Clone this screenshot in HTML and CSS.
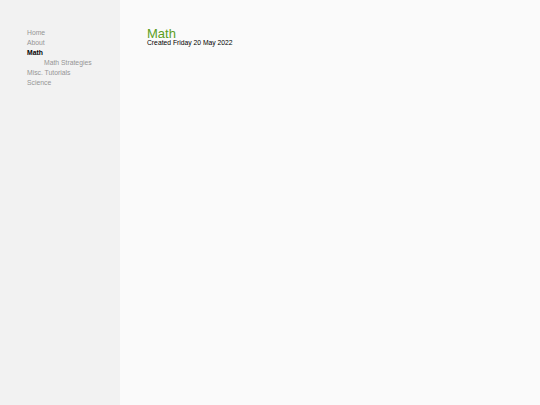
FILE: index.html
```html
<!DOCTYPE html>
<html>
<head>
<meta charset="utf-8">
<link rel="stylesheet" href="styles.css">
</head>
<body>
<div class="layout">
  <nav class="sidebar">
    <ul class="nav">
      <li><a class="link">Home</a></li>
      <li><a class="link">About</a></li>
      <li><a class="link current">Math</a>
        <ul class="sub">
          <li><a class="link">Math Strategies</a></li>
        </ul>
      </li>
      <li><a class="link">Misc. Tutorials</a></li>
      <li><a class="link">Science</a></li>
    </ul>
  </nav>
  <main class="content">
    <h1 class="title">Math</h1>
    <div class="created">Created Friday 20 May 2022</div>
  </main>
</div>
</body>
</html>
```
FILE: styles.css
```css
html, body {
  margin: 0;
  padding: 0;
  height: 100%;
}
body {
  font-family: "Liberation Sans", Arial, sans-serif;
  background: #fafafa;
  color: #000;
}
.layout {
  display: flex;
  height: 100%;
}
.sidebar {
  width: 120px;
  flex: none;
  background: #f2f2f2;
  padding-top: 28px;
  box-sizing: border-box;
}
.nav, .sub {
  list-style: none;
  margin: 0;
  padding: 0;
}
.nav {
  padding-left: 27px;
}
.sub {
  padding-left: 17px;
}
.link {
  display: block;
  font-size: 6.8px;
  line-height: 10px;
  color: #959595;
  text-decoration: none;
}
.current {
  color: #000;
  font-weight: bold;
}
.content {
  flex: 1;
  padding: 28px 0 0 27px;
}
.title {
  margin: 0;
  font-size: 13px;
  font-weight: normal;
  line-height: 11px;
  color: #5a9e1c;
}
.created {
  font-size: 6.75px;
  line-height: 8px;
}
```
